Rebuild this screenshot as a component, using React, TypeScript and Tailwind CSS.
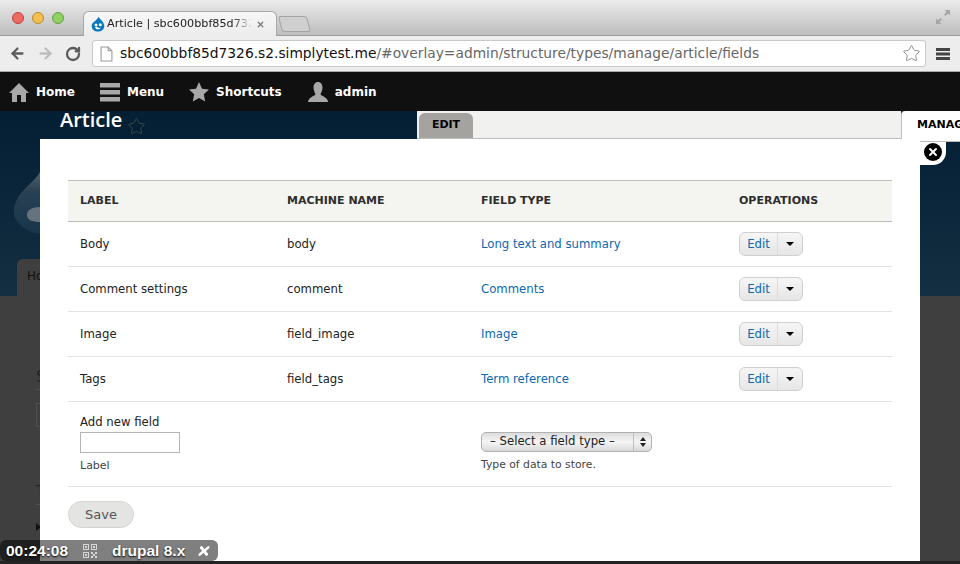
import { ArrowLeft, ArrowRight, RotateCw, Star, X } from "lucide-react";

const font = "font-['DejaVu_Sans',sans-serif]";

const fields = [
  { label: "Body", machine: "body", type: "Long text and summary" },
  { label: "Comment settings", machine: "comment", type: "Comments" },
  { label: "Image", machine: "field_image", type: "Image" },
  { label: "Tags", machine: "field_tags", type: "Term reference" },
];

const DrupalDrop = ({ className }: { className: string }) => (
  <svg viewBox="0 0 16 16" className={className}>
    <path d="M8.6 0.5C9 3 13.8 4.600 14.300 10c0 3.300-2.800 5.600-6.300 5.600S1.700 13.300 1.700 10C1.700 5.800 7.500 4.600 8.600 0.500z" fill="#0678be" />
    <path d="M5 11.500c1.500-1.300 2.300-.6 3 0 .7.600 1.800.9 3-.3-.3 2-4.700 3.400-6 .3z" fill="#fff" />
    <circle cx="6" cy="9" r="1.500" fill="#fff" />
    <circle cx="10.300" cy="8.800" r="1.500" fill="#fff" />
  </svg>
);

const AdminIcon = ({ d }: { d: string }) => (
  <svg viewBox="0 0 20 20" className="size-[20px]" fill="#a8a8a8">
    <path d={d} />
  </svg>
);

const adminItems = [
  { name: "Home", gap: "mr-[25px]", d: "M10 1 L20 11 H17 V20 H12 V13 H8 V20 H3 V11 H0 Z" },
  { name: "Menu", gap: "mr-[25px]", d: "M0 1h20v4.500H0zM0 8h20v4.500H0zM0 15h20v4.500H0z" },
  { name: "Shortcuts", gap: "mr-[26px]", d: "M10 0l3 6.700 7 .8-5.200 4.800 1.400 7.200L10 16l-6.200 3.500 1.400-7.200L0 7.500l7-.8z" },
  { name: "admin", gap: "", d: "M10 0c3 0 4.500 2.500 4.500 5.500S13 11 12.500 12.500c1 1.500 7.500 3 7.500 7.500H0c0-4.500 6.500-6 7.500-7.500C7 11 5.500 8.500 5.500 5.500S7 0 10 0z" },
];

const EditButton = () => (
  <div className="flex h-[24px] w-[64px] rounded-[6px] border border-[#cfcfcf] bg-gradient-to-b from-[#f6f6f6] to-[#e6e6e6]">
    <span className="flex w-[38px] items-center justify-center border-r border-[#dcdcdc] pt-[2px] text-[#0b68b1]">Edit</span>
    <span className="flex flex-1 items-center justify-center">
      <span className="border-x-[4px] border-t-[4px] border-x-transparent border-t-black" />
    </span>
  </div>
);

export default function App() {
  return (
    <div className={`${font} relative flex h-[564px] w-[960px] flex-col overflow-hidden bg-[#3f3f3f]`}>
      {/* tab strip */}
      <div className="relative flex h-[36px] items-end border-b border-[#9c9c9c] bg-gradient-to-b from-[#ebebeb] to-[#bdbdbd] pl-[12px]">
        <div className="mb-[11px] mr-[8px] flex gap-[8px]">
          <span className="size-[12px] rounded-full border border-[#b8433e] bg-[#ee6a62]" />
          <span className="size-[12px] rounded-full border border-[#b98a2c] bg-[#f5bf4f]" />
          <span className="size-[12px] rounded-full border border-[#6b9c44] bg-[#8fd163]" />
        </div>
        <div className="relative top-px ml-[11px] flex h-[25px] w-[194px] items-center rounded-t-[6px] border border-b-0 border-[#a8a8a8] bg-gradient-to-b from-[#f7f7f7] to-[#ececec] pl-[6px] text-[#222]">
          <DrupalDrop className="mr-px size-[16px] shrink-0" />
          <span className="w-[145px] whitespace-nowrap text-[11.200px] [mask-image:linear-gradient(to_right,black_86%,transparent)]">Article | sbc600bbf85d732</span>
          <X className="ml-[4px] size-[9px] text-[#777]" strokeWidth={3.500} />
        </div>
        <div className="mb-[3px] ml-[3px] h-[16px] w-[29px] skew-x-[15deg] rounded-[3px] border border-[#a3a3a3] bg-[#cfcfcf]" />
        <svg viewBox="0 0 16 16" className="absolute right-[9px] top-[9px] size-[16px]" fill="#a6a6a6">
          <path d="M9.500 1H15V6.500L13 4.500 10.500 7 9 5.500 11.500 3zM1 9.500V15H6.500L4.500 13 7 10.500 5.500 9 3 11.500z" />
        </svg>
      </div>

      {/* toolbar */}
      <div className="flex h-[36px] items-center border-b border-[#a9a9a9] bg-[#ededed] pl-[9px]">
        <ArrowLeft className="size-[17px] text-[#5c5c5c]" strokeWidth={3.200} />
        <ArrowRight className="ml-[11px] size-[17px] text-[#bdbdbd]" strokeWidth={3.200} />
        <RotateCw className="ml-[11px] size-[16px] text-[#5c5c5c]" strokeWidth={3.400} />
        <div className="ml-[11px] flex h-[27px] w-[834px] shrink-0 items-center rounded-[3px] border border-[#c9c9c9] bg-white pl-[7px] pr-[4px]">
          <svg viewBox="0 0 12 14" className="mr-[7px] h-[16px] w-[13px] shrink-0" fill="#fff" stroke="#9a9a9a">
            <path d="M1 .5h6.500L11 4v9.500H1zM7.500 .5V4H11" />
          </svg>
          <span className="flex-1 whitespace-nowrap text-[13.800px] text-[#111]">
            sbc600bbf85d7326.s2.simplytest.me
            <span className="text-[#666]">/#overlay=admin/structure/types/manage/article/fields</span>
          </span>
          <Star className="size-[19px] text-[#8a8a8a]" strokeWidth={1.200} />
        </div>
        <svg viewBox="0 0 14 14" className="ml-[10px] size-[14px]" fill="#444">
          <path d="M0 1h14v3H0zM0 5.500h14v3H0zM0 10h14v3H0z" />
        </svg>
      </div>

      {/* admin bar */}
      <div className="flex h-[39px] items-center bg-[#101010] pl-[9px] text-[12px] font-bold text-white">
        {adminItems.map((item) => (
          <div key={item.name} className={`flex items-center gap-[7px] ${item.gap}`}>
            <AdminIcon d={item.d} />
            <span>{item.name}</span>
          </div>
        ))}
      </div>

      {/* page behind the overlay */}
      <div className="relative flex h-[185px] flex-col bg-gradient-to-b from-[#041f33] to-[#142e42]">
        <div className="flex h-[28px]">
          <div className="flex w-[417px] pl-[60px]">
            <span className="font-['Open_Sans',sans-serif] text-[20px] font-semibold leading-[18px] text-white">Article</span>
            <Star className="ml-[5px] mt-[6px] size-[19px] text-[#3c4a4a]" strokeWidth={1.200} />
          </div>
          <div className="flex w-[484px] items-end border-b border-[#bdbdbd] bg-[#f1f1ef] pl-[2px]">
            <span className="flex h-[25px] w-[54px] items-center justify-center rounded-t-[6px] bg-[#a4a39f] text-[11px] font-bold text-black">EDIT</span>
          </div>
          <div className="h-[31px] w-[59px] overflow-hidden whitespace-nowrap rounded-tl-[4px] border-b border-l border-[#bdbdbd] bg-white pl-[15px] pt-[6px] text-[11px] font-bold text-black">MANAGE FIELDS</div>
        </div>
        <svg viewBox="0 0 26 62" className="ml-[14px] mt-[33px] h-[62px] w-[26px]">
          <defs>
            <linearGradient id="drop" x1="0" y1="0" x2="0" y2="1">
              <stop offset="0" stopColor="#55646f" />
              <stop offset="0.3" stopColor="#2a4154" />
              <stop offset="1" stopColor="#16344a" />
            </linearGradient>
          </defs>
          <path d="M26 0C20 12 0 20 0 40c0 11 12 20 26 22z" fill="url(#drop)" />
          <path d="M26 35c-8 0-13 3-13 8s5 7 13 7z" fill="#64737e" />
        </svg>
        <div className="mt-auto ml-[17px] flex h-[37px] w-[40px] items-start rounded-t-[6px] bg-[#3f3f3f] pl-[10px] pt-[8px] text-[12px] text-[#111]">Ho</div>
      </div>

      {/* dimmed remains on the left of the overlay */}
      <div className="flex w-[40px] flex-1 flex-col pl-[36px] pt-[71px] text-[16px] leading-[20px] text-[#222]">
        <div className="h-[23px] border-b border-[#505050]">S</div>
        <div className="mt-[13px] h-[24px] border border-r-0 border-[#505050]" />
        <div className="mt-[55px] h-[23px] border-b border-[#505050]">T</div>
        <div className="mt-[18px] size-0 border-y-[4px] border-l-[5px] border-y-transparent border-l-[#111]" />
      </div>

      {/* overlay dialog */}
      <div className="absolute left-[40px] top-[139px] h-[422px] w-[880px] bg-white px-[28px] pt-[41px] text-[11.700px] text-[#222]">
        <table className="w-[824px] table-fixed border-collapse text-left">
          <thead>
            <tr className="h-[41px] border-y border-[#bdbcb5] bg-[#f4f4f0] text-[11px] font-bold text-[#2e2e2e]">
              <th className="w-[207px] pl-[12px] pt-px">LABEL</th>
              <th className="w-[194px] pl-[12px] pt-px">MACHINE NAME</th>
              <th className="w-[258px] pl-[12px] pt-px">FIELD TYPE</th>
              <th className="pl-[12px] pt-px">OPERATIONS</th>
            </tr>
          </thead>
          <tbody>
            {fields.map((field) => (
              <tr key={field.label} className="h-[45px] border-b border-[#e4e4df]">
                <td className="pl-[12px] pt-[2px]">{field.label}</td>
                <td className="pl-[12px] pt-[2px]">{field.machine}</td>
                <td className="pl-[12px] pt-[2px] text-[#0b68b1]">{field.type}</td>
                <td className="pl-[12px]"><EditButton /></td>
              </tr>
            ))}
            <tr className="h-[85px] border-b border-[#e4e4df]">
              <td className="pl-[12px] pt-[13px] align-top">
                <div className="leading-[14px]">Add new field</div>
                <input className="mt-[3px] block h-[21px] w-[100px] border border-[#b4b4b4] bg-white" />
                <div className="mt-[5px] text-[11px] text-[#444]">Label</div>
              </td>
              <td />
              <td className="pl-[12px] pt-[30px] align-top">
                <div className="flex h-[20px] w-[171px] items-center rounded-[5px] border border-[#b2b2b2] bg-gradient-to-b from-[#dcdcdc] via-[#f5f5f5] to-[#d8d8d8] pl-[8px]">
                  <span className="w-[143px] whitespace-nowrap">– Select a field type –</span>
                  <span className="flex h-full flex-1 flex-col items-center justify-center gap-[2px] border-l border-[#bdbdbd]">
                    <span className="border-x-[3px] border-b-[4px] border-x-transparent border-b-[#222]" />
                    <span className="border-x-[3px] border-t-[4px] border-x-transparent border-t-[#222]" />
                  </span>
                </div>
                <div className="mt-[5px] text-[10.800px] text-[#444]">Type of data to store.</div>
              </td>
              <td />
            </tr>
          </tbody>
        </table>
        <button className="mt-[14px] block h-[27px] w-[66px] rounded-full border border-[#d4d4d0] bg-[#e4e4e2] text-[13px] text-[#555]">Save</button>
      </div>

      {/* close button tab */}
      <div className="absolute left-[920px] top-[142px] h-[23px] w-[26px] rounded-br-[13px] bg-white" />
      <div className="absolute left-[924px] top-[143px] flex size-[18px] items-center justify-center rounded-full bg-black">
        <X className="size-[12px] text-white" strokeWidth={4} />
      </div>

      {/* simplytest badge */}
      <div className="absolute bottom-[3px] left-0 flex h-[21px] w-[218px] items-center whitespace-nowrap rounded-[6px] bg-[#00000080] pl-[6px] font-['Liberation_Sans',sans-serif] text-[15.500px] font-bold text-white [text-shadow:0_1px_2px_#000]">
        <span>00:24:08</span>
        <svg viewBox="0 0 14 14" className="ml-[15px] size-[14px] shrink-0" fill="#d8d8d8">
          <path d="M0 0h6v6H0zM1 1v4h4V1zM2 2h2v2H2zM8 0h6v6H8zM9 1v4h4V1zM10 2h2v2h-2zM0 8h6v6H0zM1 9v4h4V9zM2 10h2v2H2zM8 8h2v2H8zM12 8h2v2h-2zM10 10h2v2h-2zM8 12h2v2H8zM12 12h2v2h-2z" />
        </svg>
        <span className="ml-[15px]">drupal 8.x</span>
        <X className="ml-[12px] size-[14px] shrink-0 -skew-x-12" strokeWidth={4.500} />
      </div>
      <div className="absolute inset-x-0 bottom-0 h-[3px] bg-[#222]" />
    </div>
  );
}
